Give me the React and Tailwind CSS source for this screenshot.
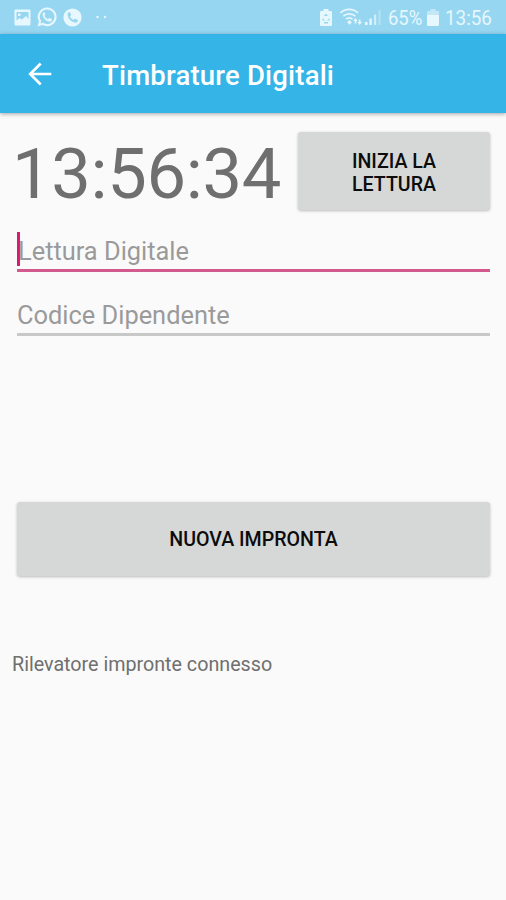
import React, { useState } from "react";

const StatusBar = () => {
  return (
    <div className="h-[34px] bg-[#97d6f0] flex items-center justify-between pl-[14px] pr-[14px] text-[#e6f7fd]">
      <div className="flex items-center gap-[6px]">
        <svg width="17" height="17" viewBox="0 0 17 17" fill="currentColor">
          <path
            fillRule="evenodd"
            d="M1.5 0.5h14a1 1 0 0 1 1 1v14a1 1 0 0 1-1 1h-14a1 1 0 0 1-1-1v-14a1 1 0 0 1 1-1zM2.5 3v8.500l3-2.500 2.500 1.500 4-3.500 2.500 3V3zM4 4.500h2.500V7H4z"
          />
        </svg>
        <svg width="20" height="20" viewBox="0 0 24 24" fill="currentColor">
          <path
            fillRule="evenodd"
            d="M12.2 0.5a11.3 11.3 0 0 0-9.8 17L0.6 23.4l6.1-1.7A11.3 11.3 0 1 0 12.2 0.5zm0 2.6a8.7 8.7 0 1 1-4.9 15.9l-3 0.8 0.8-2.9A8.7 8.7 0 0 1 12.2 3.1z"
          />
          <path d="M8.4 6.2c-1.3.7-2 2-1.5 3.9.9 3.5 3.6 6.2 7.1 7.3 1.9.5 3.3-.2 3.9-1.6.2-.5.2-1-.1-1.2l-2.6-1.4c-.4-.2-.7-.1-1 .2l-1 1.2c-2-.8-3.4-2.2-4.3-4.1l.9-1.1c.2-.3.2-.6.1-.9L9 6.5c-.1-.3-.3-.4-.6-.3z" />
        </svg>
        <svg width="19" height="19" viewBox="0 0 24 24">
          <circle cx="12" cy="12" r="11.5" fill="currentColor" />
          <path
            d="M8 5.2c-1.7.7-2.4 2.2-2 4.3.9 4.5 4.2 7.8 8.6 8.8 2.1.4 3.6-.4 4.2-2 .2-.5.1-.9-.3-1.1l-2.9-1.6c-.4-.2-.8-.1-1.1.2l-1.2 1.3c-2.2-1-3.7-2.5-4.6-4.7l1.2-1.2c.3-.3.3-.7.2-1L8.7 5.5c-.1-.3-.4-.4-.7-.3z"
            fill="#97d6f0"
          />
        </svg>
        <svg width="14" height="4" viewBox="0 0 14 4" fill="currentColor" className="ml-[7px]">
          <circle cx="2.5" cy="2" r="1.2" />
          <circle cx="10" cy="2" r="1.2" />
        </svg>
      </div>
      <div className="flex items-center">
        <svg width="12" height="17" viewBox="0 0 12 17" fill="currentColor">
          <path
            fillRule="evenodd"
            d="M3.500 0h5v2h2.500a1 1 0 0 1 1 1v13a1 1 0 0 1-1 1H1a1 1 0 0 1-1-1V3a1 1 0 0 1 1-1h2.500zM6 4.500l-2 2.500h4zM2.500 9v2.500h2.500zM9.500 9v2.500H7zM4 13v1.500h4V13z"
          />
        </svg>
        <svg
          width="23"
          height="18"
          viewBox="0 0 23 18"
          fill="none"
          stroke="currentColor"
          strokeWidth="1.7"
          className="ml-[8px]"
        >
          <path d="M0.500 5a12.500 12.500 0 0 1 17.500 0M3.300 8.200a8.700 8.700 0 0 1 12 0M6 11.200a5 5 0 0 1 6.500 0" />
          <path
            d="M9.500 12l2.400 2.200-2.400 2.500-2.400-2.500zM15.500 10l2.300 3h-1.500v2.500h-1.600V13h-1.500zM19.700 17l-2.300-3h1.500v-2.500h1.600V14h1.500z"
            fill="currentColor"
            stroke="none"
          />
        </svg>
        <svg width="17" height="16" viewBox="0 0 17 16" fill="currentColor" className="ml-[2px]">
          <path d="M0 13h2.500v3H0zM4.500 9.500h2.300V16H4.500z" />
          <path d="M9 5.500h2.200V16H9z" opacity="0.700" />
          <path d="M13.500 1h2.200v15h-2.200z" opacity="0.350" />
        </svg>
        <div className="w-[34px] ml-[6px]">
          <div className="font-['Roboto'] text-[20.5px] leading-[34px] pt-[2px] origin-left scale-x-[0.9] whitespace-nowrap">
            65%
          </div>
        </div>
        <svg width="12" height="17" viewBox="0 0 12 17" fill="currentColor" className="ml-[5px] mr-px">
          <path d="M3.500 0h5v2h2.500a1 1 0 0 1 1 1v3H0V3a1 1 0 0 1 1-1h2.500z" opacity="0.550" />
          <path d="M0 6h12v10a1 1 0 0 1-1 1H1a1 1 0 0 1-1-1z" />
        </svg>
        <div className="w-[47px] ml-[5px]">
          <div className="font-['Roboto'] text-[20.5px] leading-[34px] pt-[2px] origin-left scale-x-[0.92] whitespace-nowrap">
            13:56
          </div>
        </div>
      </div>
    </div>
  );
};

const AppBar = ({ title }) => {
  return (
    <div className="h-[79px] bg-[#34b4e7] flex items-center pl-[28px] shadow-[0_1px_4px_rgba(0,0,0,0.35)]">
      <button type="button" className="w-[24px] mr-[50px]">
        <svg
          width="24"
          height="24"
          viewBox="0 0 24 24"
          fill="none"
          stroke="#ffffff"
          strokeWidth="2.7"
        >
          <path d="M23.3 12H2.5M12.7 1.5L2.2 12l10.5 10.5" />
        </svg>
      </button>
      <h1 className="text-white text-[27.5px] tracking-[0.2px] font-medium leading-[32px] pt-[4px] whitespace-nowrap">
        {title}
      </h1>
    </div>
  );
};

const Button = ({ className, children }) => {
  return (
    <button
      type="button"
      className={`bg-[#d6d8d7] text-[#0c0c0c] text-[19.6px] leading-[23px] font-medium uppercase rounded-[3px] shadow-[0_1px_3px_rgba(0,0,0,0.25)] ${className}`}
    >
      {children}
    </button>
  );
};

const App = () => {
  const [reading, setReading] = useState("");
  const [code, setCode] = useState("");

  return (
    <div className="h-[900px] w-[506px] bg-[#fafafa] overflow-hidden font-['Roboto',sans-serif]">
      <StatusBar />
      <AppBar title="Timbrature Digitali" />
      <div className="pt-[19px]">
        <div className="flex justify-between pl-[12px] pr-[16px]">
          <div className="text-[70.5px] leading-[85px] h-[83px] tracking-[-0.35px] text-[#6f6f6f] whitespace-nowrap">
            13:56:34
          </div>
          <Button className="w-[192px] h-[78px] px-10 pt-[3px]">
            Inizia la lettura
          </Button>
        </div>
        <div className="pl-[17px] pr-[16px]">
          <div className="flex items-start h-[40px] mt-[17px] border-b-[3px] border-[#d25a8c]">
            <div className="w-[3px] h-[34px] bg-[#d81b72] -mr-[3px]" />
            <input
              value={reading}
              onChange={(e) => setReading(e.target.value)}
              placeholder="Lettura Digitale"
              className="w-full h-[34px] pt-[4px] pl-px text-[25.4px] outline-none placeholder:text-[#9a9a9a]"
            />
          </div>
          <div className="h-[41px] mt-[23px] border-b-[3px] border-[#c8c8c8]">
            <input
              value={code}
              onChange={(e) => setCode(e.target.value)}
              placeholder="Codice Dipendente"
              className="w-full h-[34px] pt-[6px] text-[25.4px] outline-none placeholder:text-[#9a9a9a]"
            />
          </div>
          <Button className="w-full h-[74px] mt-[166px] pt-px">
            Nuova impronta
          </Button>
        </div>
        <p className="pl-[12px] mt-[77px] text-[19.7px] leading-[24px] text-[#6f6f6f]">
          Rilevatore impronte connesso
        </p>
      </div>
    </div>
  );
};

export default App;
